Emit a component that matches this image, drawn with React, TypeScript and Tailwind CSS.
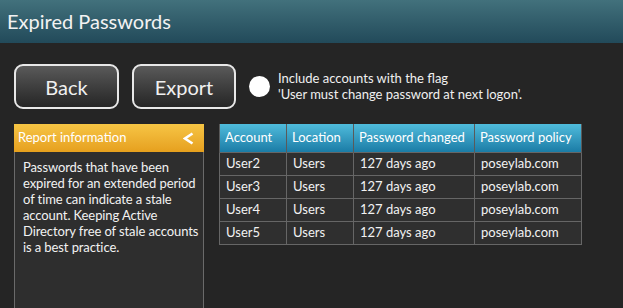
const rows = [
  { account: 'User2', location: 'Users', changed: '127 days ago', policy: 'poseylab.com' },
  { account: 'User3', location: 'Users', changed: '127 days ago', policy: 'poseylab.com' },
  { account: 'User4', location: 'Users', changed: '127 days ago', policy: 'poseylab.com' },
  { account: 'User5', location: 'Users', changed: '127 days ago', policy: 'poseylab.com' },
]

const cols = ['w-[67px]', 'w-[67px]', 'w-[121px]', 'w-[107px]']

function ActionButton({ label, width }: { label: string; width: string }) {
  return (
    <button
      className={`${width} h-[45px] rounded-[9px] border-2 border-[#e8e8e8] bg-gradient-to-b from-[#5a5a5a] to-[#262626] text-[20px] text-[#f0f0f0]`}
    >
      {label}
    </button>
  )
}

export default function App() {
  return (
    <div
      className="w-[623px] h-[308px] overflow-hidden bg-[#252525] text-white"
      style={{ fontFamily: '"Segoe UI", Lato, "Noto Sans", sans-serif' }}
    >
      <header className="h-[43px] flex items-center px-[7px] bg-gradient-to-b from-[#42717c] to-[#224a5a]">
        <h1 className="text-[20px] text-[#f2f2f2] leading-none pb-[2px]">Expired Passwords</h1>
      </header>

      <div className="flex items-center pl-[14px] pt-[21px]">
        <ActionButton label="Back" width="w-[105px]" />
        <div className="w-[13px]" />
        <ActionButton label="Export" width="w-[104px]" />
        <span className="ml-[13px] w-[21px] h-[21px] rounded-full bg-white" />
        <p className="ml-[8px] text-[13px] leading-[16px] text-[#f0f0f0] -mt-[2px] whitespace-nowrap">
          Include accounts with the flag
          <br />
          'User must change password at next logon'.
        </p>
      </div>

      <div className="flex items-start pl-[14px] pt-[15px]">
        <aside className="w-[190px] h-[184px] flex flex-col">
          <div className="h-[28px] flex items-center justify-between pl-[4px] pr-[10px] bg-gradient-to-b from-[#f6c544] to-[#e6a01d]">
            <span className="text-[13px] text-white">Report information</span>
            <svg width="11" height="13" viewBox="0 0 11 13">
              <polyline points="9.5,1.5 2,6.5 9.5,11.5" fill="none" stroke="white" strokeWidth="2.6" />
            </svg>
          </div>
          <div className="flex-1 bg-[#2e2e2e] border-x border-[#6a6a6a] pl-[8px] pr-0 pt-[7px]">
            <p className="text-[13px] leading-[16px] text-[#f2f2f2] tracking-[-0.1px]">
              Passwords that have been expired for an extended period of time can indicate a stale account. Keeping Active Directory free of stale accounts is a best practice.
            </p>
          </div>
        </aside>

        <table className="ml-[15px] w-[362px] border-collapse table-fixed text-[13px] text-[#f2f2f2]">
          <thead>
            <tr className="h-[28px] bg-gradient-to-b from-[#4fbcdc] to-[#1a7ca6]">
              {['Account', 'Location', 'Password changed', 'Password policy'].map((h, i) => (
                <th
                  key={h}
                  className={`${cols[i]} px-[5px] text-left font-normal text-white whitespace-nowrap border-x border-[#5a5a5a]`}
                >
                  {h}
                </th>
              ))}
            </tr>
          </thead>
          <tbody>
            {rows.map((r) => (
              <tr key={r.account} className="h-[23px] bg-[#2f2f2f]">
                <td className="px-[6px] border border-[#666]">{r.account}</td>
                <td className="px-[6px] border border-[#666]">{r.location}</td>
                <td className="px-[6px] border border-[#666]">{r.changed}</td>
                <td className="px-[6px] border border-[#666]">{r.policy}</td>
              </tr>
            ))}
          </tbody>
        </table>
      </div>
    </div>
  )
}
